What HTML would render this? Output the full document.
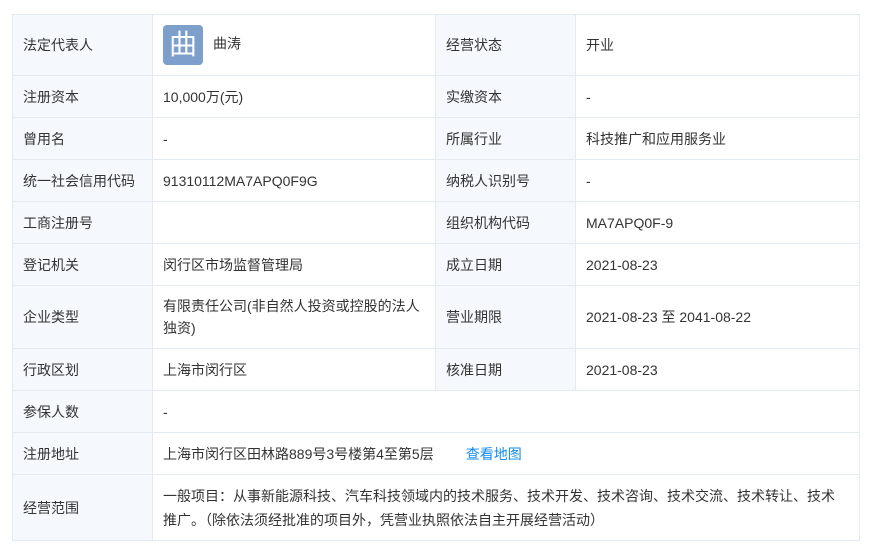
<!DOCTYPE html>
<html><head><meta charset="utf-8"><style>
body{margin:0;background:#fff;font-family:"Liberation Sans","Noto Sans CJK SC",sans-serif;font-size:14px;color:#333}
table{position:absolute;left:12px;top:14px;border-collapse:collapse;table-layout:fixed;width:847px}
td{border:1px solid #e4eaf2;padding:0 10px;line-height:22px;vertical-align:middle}
td.l{background:#f5f8fd;color:#333}
a{color:#128bed;text-decoration:none;margin-left:32px}
.av{display:inline-block;width:40px;height:40px;border-radius:4px;background:#7d9fcc;color:#fff;font-size:28px;line-height:40px;text-align:center;vertical-align:middle;margin-right:10px}
</style></head><body>
<table>
<colgroup><col style="width:140px"><col style="width:283px"><col style="width:140px"><col style="width:284px"></colgroup>
<tr style="height:61px"><td class="l">法定代表人</td><td><span class="av">曲</span>曲涛</td><td class="l">经营状态</td><td>开业</td></tr>
<tr style="height:42px"><td class="l">注册资本</td><td>10,000万(元)</td><td class="l">实缴资本</td><td>-</td></tr>
<tr style="height:42px"><td class="l">曾用名</td><td>-</td><td class="l">所属行业</td><td>科技推广和应用服务业</td></tr>
<tr style="height:42px"><td class="l">统一社会信用代码</td><td>91310112MA7APQ0F9G</td><td class="l">纳税人识别号</td><td>-</td></tr>
<tr style="height:42px"><td class="l">工商注册号</td><td></td><td class="l">组织机构代码</td><td>MA7APQ0F-9</td></tr>
<tr style="height:42px"><td class="l">登记机关</td><td>闵行区市场监督管理局</td><td class="l">成立日期</td><td>2021-08-23</td></tr>
<tr style="height:63px"><td class="l">企业类型</td><td>有限责任公司(非自然人投资或控股的法人<br>独资)</td><td class="l">营业期限</td><td>2021-08-23 至 2041-08-22</td></tr>
<tr style="height:42px"><td class="l">行政区划</td><td>上海市闵行区</td><td class="l">核准日期</td><td>2021-08-23</td></tr>
<tr style="height:42px"><td class="l">参保人数</td><td colspan="3">-</td></tr>
<tr style="height:42px"><td class="l">注册地址</td><td colspan="3">上海市闵行区田林路889号3号楼第4至第5层<a>查看地图</a></td></tr>
<tr style="height:66px"><td class="l">经营范围</td><td colspan="3" style="line-height:24px">一般项目：从事新能源科技、汽车科技领域内的技术服务、技术开发、技术咨询、技术交流、技术转让、技术<br>推广。（除依法须经批准的项目外，凭营业执照依法自主开展经营活动）</td></tr>
</table>
</body></html>
